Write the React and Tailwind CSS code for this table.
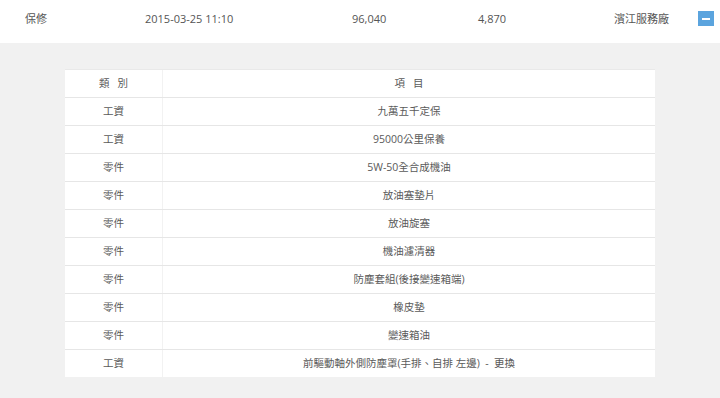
export default function App() {
  const rows = [
    ["工資", "九萬五千定保"],
    ["工資", "95000公里保養"],
    ["零件", "5W-50全合成機油"],
    ["零件", "放油塞墊片"],
    ["零件", "放油旋塞"],
    ["零件", "機油濾清器"],
    ["零件", "防塵套組(後接變速箱端)"],
    ["零件", "橡皮墊"],
    ["零件", "變速箱油"],
    ["工資", "前驅動軸外側防塵罩(手排、自排 左邊)  -  更換"],
  ];
  const font = { fontFamily: '"Open Sans", "Noto Sans CJK TC", sans-serif' };
  return (
    <div className="w-[720px] h-[398px] bg-[#f1f1f1] overflow-hidden text-[#555]" style={font}>
      <div className="h-[43px] bg-white pt-[11px] pl-[25px]">
        <div className="flex items-center h-[15px] text-[11px] leading-none">
          <div className="w-[120px]">保修</div>
          <div className="w-[207px]">2015-03-25 11:10</div>
          <div className="w-[126px]">96,040</div>
          <div className="w-[136px]">4,870</div>
          <div className="w-[84px]">濱江服務廠</div>
          <div className="w-[16px] h-[15px] bg-[#5ba4de] flex items-center justify-center">
            <div className="w-[8px] h-[2px] bg-white" />
          </div>
        </div>
      </div>
      <div className="ml-[65px] mt-[26px] w-[590px] bg-white border-t border-[#e9e9e9] text-[10.5px] text-[#5a5a5a]">
        <div className="grid grid-cols-[98px_1fr] h-[27px]">
          <div className="flex items-center justify-center border-r border-[#f2f2f2]">
            類<span className="inline-block w-[8px]" />別
          </div>
          <div className="flex items-center justify-center">
            項<span className="inline-block w-[8px]" />目
          </div>
        </div>
        {rows.map(([a, b], i) => (
          <div key={i} className="grid grid-cols-[98px_1fr] h-[28px] border-t border-[#e6e6e6]">
            <div className="flex items-center justify-center border-r border-[#f2f2f2]">{a}</div>
            <div className="flex items-center justify-center whitespace-pre">{b}</div>
          </div>
        ))}
      </div>
    </div>
  );
}
